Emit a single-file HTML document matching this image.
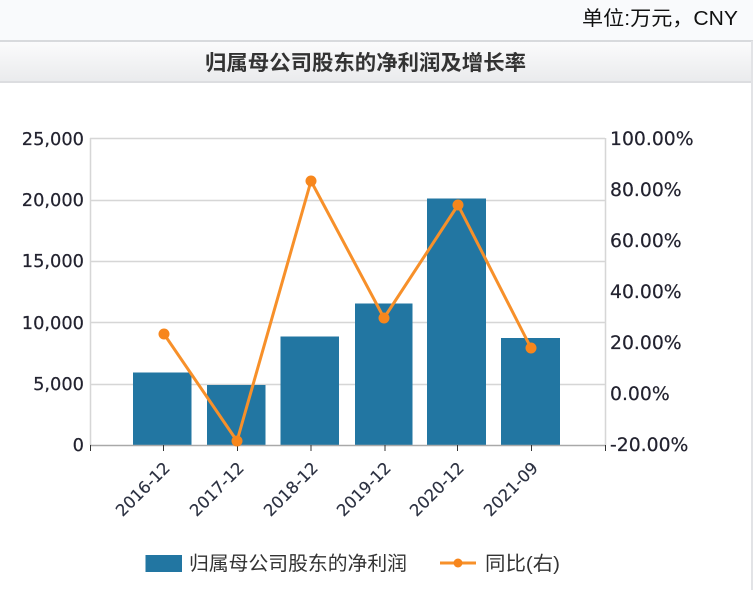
<!DOCTYPE html>
<html lang="zh">
<head>
<meta charset="utf-8">
<title>归属母公司股东的净利润及增长率</title>
<style>
html,body{margin:0;padding:0;width:753px;height:590px;overflow:hidden;background:#fff}
svg{display:block;position:absolute;left:0;top:0}
.n{font-family:"DejaVu Sans","Liberation Sans",sans-serif;font-size:17.8px;fill:#22222f;stroke:#22222f;stroke-width:.2px}
.r{font-family:"DejaVu Sans","Liberation Sans",sans-serif;font-size:18.8px;fill:#22222f;stroke:#22222f;stroke-width:.2px}
.x{font-family:"DejaVu Sans","Liberation Sans",sans-serif;font-size:16.4px;fill:#2b3040;stroke:#2b3040;stroke-width:.15px}
.c{font-family:"Liberation Sans","Noto Sans CJK SC",sans-serif;fill:#333}
</style>
</head>
<body>
<svg width="753" height="590" viewBox="0 0 753 590" xmlns="http://www.w3.org/2000/svg">
<defs>
<linearGradient id="h" x1="0" y1="0" x2="0" y2="1">
<stop offset="0" stop-color="#fbfbfc"/>
<stop offset="1" stop-color="#eaebed"/>
</linearGradient>
</defs>
<rect x="0" y="0" width="753" height="41" fill="#f9fafc"/>
<rect x="0" y="40" width="753" height="2" fill="#d8dadd"/>
<rect x="0" y="42" width="751" height="39" fill="url(#h)"/>
<rect x="0" y="81" width="751" height="2" fill="#dcdde0"/>
<rect x="751" y="41" width="2" height="549" fill="#e2e3e6"/>
<text x="582" y="25" textLength="156" lengthAdjust="spacingAndGlyphs" font-size="20" class="c" style="fill:#111">单位:万元，CNY</text>
<text x="205" y="70" textLength="321" lengthAdjust="spacingAndGlyphs" font-size="21" font-weight="700" class="c">归属母公司股东的净利润及增长率</text>

<g stroke="#d6d6d6" stroke-width="1.5" fill="none">
<path d="M90 138.5H605M90 200.5H605M90 261.5H605M90 322.5H605M90 384.5H605"/>
<path d="M90.5 138V445M605.5 138V445"/>
</g>
<g fill="#2276a2">
<rect x="133" y="372.500" width="58.500" height="72.500"/>
<rect x="207" y="385" width="58.500" height="60"/>
<rect x="280.500" y="336.500" width="58.500" height="108.500"/>
<rect x="355" y="303.500" width="57.500" height="141.500"/>
<rect x="427" y="198.500" width="59" height="246.500"/>
<rect x="501" y="338" width="59" height="107"/>
</g>
<path d="M90 445.500H605" stroke="#a9a9a9" stroke-width="1.500"/>
<path d="M90.500 445V451M163.500 445V451M237.500 445V451M311 445V451M385 445V451M457.500 445V451M531.500 445V451M605.500 445V451" stroke="#333" stroke-width="1"/>
<polyline points="164,334 237,441 311,181 384,318 458,205 531,348" fill="none" stroke="#f7902a" stroke-width="3" stroke-linejoin="round"/>
<g fill="#f7861c">
<circle cx="164" cy="334" r="5.500"/>
<circle cx="237" cy="441" r="5.500"/>
<circle cx="311" cy="181" r="5.500"/>
<circle cx="384" cy="318" r="5.500"/>
<circle cx="458" cy="205" r="5.500"/>
<circle cx="531" cy="348" r="5.500"/>
</g>

<g class="n" text-anchor="end">
<text x="84" y="145">25,000</text>
<text x="84" y="206">20,000</text>
<text x="84" y="267">15,000</text>
<text x="84" y="329">10,000</text>
<text x="84" y="390">5,000</text>
<text x="84" y="451">0</text>
</g>
<g class="r">
<text x="610" y="145">100.00%</text>
<text x="610" y="196">80.00%</text>
<text x="610" y="247">60.00%</text>
<text x="610" y="298">40.00%</text>
<text x="610" y="349">20.00%</text>
<text x="610" y="400">0.00%</text>
<text x="610" y="451">-20.00%</text>
</g>
<g class="x" text-anchor="end">
<text transform="translate(171 469) rotate(-45)">2016-12</text>
<text transform="translate(245 469) rotate(-45)">2017-12</text>
<text transform="translate(319 469) rotate(-45)">2018-12</text>
<text transform="translate(392 469) rotate(-45)">2019-12</text>
<text transform="translate(465 469) rotate(-45)">2020-12</text>
<text transform="translate(539 469) rotate(-45)">2021-09</text>
</g>

<rect x="145.500" y="555" width="36.500" height="17" fill="#2276a2"/>
<text x="189" y="570" textLength="218" lengthAdjust="spacingAndGlyphs" font-size="19.500" class="c">归属母公司股东的净利润</text>
<path d="M440 563H476" stroke="#f7902a" stroke-width="3"/>
<circle cx="458" cy="563" r="4.500" fill="#f7861c"/>
<text x="485" y="570" textLength="75" lengthAdjust="spacingAndGlyphs" font-size="19.500" class="c">同比(右)</text>
</svg>
</body>
</html>
